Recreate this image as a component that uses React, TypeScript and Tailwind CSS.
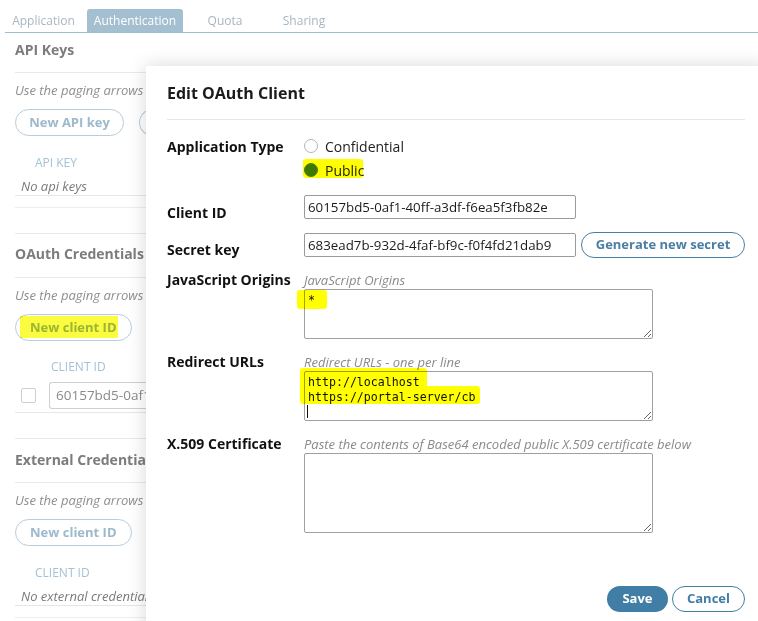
import React from "react";

function Mark({ className }: { className: string }) {
  return <span className={`pointer-events-none absolute bg-[#ffff00] mix-blend-multiply ${className}`} />;
}

function PageSection({
  title,
  buttonLabel,
  column,
  children,
  highlight,
}: {
  title: string;
  buttonLabel: string;
  column: React.ReactNode;
  children: React.ReactNode;
  highlight?: boolean;
}) {
  return (
    <>
      <div className="flex h-[44px] items-start border-b border-[#e9e9e9] pt-[10px] text-[14px] font-bold leading-[20px] text-[#7c7c7c]">
        {title}
      </div>
      <p className="mt-[8px] w-[131px] overflow-hidden whitespace-nowrap text-[13px] italic leading-[18px] text-[#8e8e8e]">
        Use the paging arrows to see more
      </p>
      <div className="mt-[10px] flex gap-[15px]">
        <button className="relative h-[27px] rounded-full border border-[#b9ccd9] px-[14px] text-[13px] font-bold text-[#9db9cc]">
          {buttonLabel}
          {highlight && <span className="pointer-events-none absolute left-[4px] top-[1px] h-[22px] w-[98px] bg-[#fbfb40] mix-blend-multiply" />}
        </button>
        <button className="h-[27px] w-[20px] rounded-l-full border border-r-0 border-[#b9ccd9]" />
      </div>
      {column}
      {children}
    </>
  );
}

export default function App() {
  return (
    <div className="relative h-[621px] w-[758px] overflow-hidden bg-white font-['Open_Sans',sans-serif]">
      {/* tabs */}
      <div className="ml-[5px] flex h-[33px] items-end gap-[5px] border-b border-[#9dbdd1] pt-[9px]">
        <div className="flex h-[23px] w-[77px] items-center justify-center text-[12px] text-[#a9b6c0]">Application</div>
        <div className="flex h-[23px] w-[96px] items-center justify-center rounded-t-[3px] bg-[#a4bfd0] text-[12px] text-white">
          Authentication
        </div>
        <div className="flex h-[23px] w-[74px] items-center justify-center text-[12px] text-[#a9b6c0]">Quota</div>
        <div className="flex h-[23px] w-[74px] items-center justify-center text-[12px] text-[#a9b6c0]">Sharing</div>
      </div>

      {/* page behind the dialog */}
      <div className="px-[15px]">
        <div className="flex h-[40px] items-start border-b border-[#e9e9e9] pt-[7px] text-[14px] font-bold leading-[20px] text-[#7c7c7c]">
          API Keys
        </div>
        <p className="mt-[8px] w-[131px] overflow-hidden whitespace-nowrap text-[13px] italic leading-[18px] text-[#8e8e8e]">
          Use the paging arrows to see more
        </p>
        <div className="mt-[10px] flex gap-[15px]">
          <button className="h-[27px] w-[109px] rounded-full border border-[#b9ccd9] text-[13px] font-bold text-[#9db9cc]">
            New API key
          </button>
          <button className="h-[27px] w-[20px] rounded-l-full border border-r-0 border-[#b9ccd9]" />
        </div>
        <div className="mt-[19px] pl-[20px] text-[12px] leading-[16px] text-[#a3c2d6]">API KEY</div>
        <div className="h-[25px] border-b border-[#e6e6e6] pl-[6px] pt-[6px] text-[13px] italic leading-[18px] text-[#7a7a7a]">
          No api keys
        </div>
        <div className="h-[12px] border-b border-[#eeeeee]" />
        <div className="h-[26px] border-b border-[#e9e9e9]" />

        <PageSection
          title="OAuth Credentials"
          buttonLabel="New client ID"
          highlight
          column={<div className="mt-[18px] pl-[36px] text-[12px] leading-[16px] text-[#a3c2d6]">CLIENT ID</div>}
        >
          <div className="flex items-center gap-[13px] border-b border-[#e6e6e6] pb-[3px] pl-[6px] pt-[7px]">
            <span className="h-[15px] w-[15px] rounded-[2px] border border-[#cfcfcf] bg-white" />
            <div className="flex h-[27px] w-[98px] items-center overflow-hidden whitespace-nowrap rounded-l-[3px] border border-r-0 border-[#cfcfcf] px-[6px] text-[13.5px] text-[#8a8a8a]">
              60157bd5-0af1-40ff-a3df-f6ea5f3fb82e
            </div>
          </div>
          <div className="h-[26px] border-b border-[#e9e9e9]" />
        </PageSection>

        <div className="[&>div:first-child]:pt-[11px]">
          <PageSection
            title="External Credentials"
            buttonLabel="New client ID"
            column={<div className="mt-[19px] pl-[20px] text-[12px] leading-[16px] text-[#a3c2d6]">CLIENT ID</div>}
          >
            <div className="h-[25px] border-b border-[#e6e6e6] pl-[6px] pt-[6px] text-[13px] italic leading-[18px] text-[#7a7a7a]">
              No external credentials
            </div>
            <div className="h-[12px] border-b border-[#eeeeee]" />
          </PageSection>
        </div>
      </div>

      {/* dialog */}
      <div className="absolute left-[146px] top-[66px] h-[600px] w-[620px] bg-white px-[21px] shadow-[0_0_18px_rgba(0,0,0,0.16)]">
        <div className="h-[54px] border-b border-[#e6e6e6] pt-[16px] text-[16px] font-bold leading-[22px] text-[#1b1b1b]">
          Edit OAuth Client
        </div>

        {/* application type */}
        <div className="mt-[14px] flex">
          <div className="flex h-[24px] w-[137px] items-center text-[14px] font-bold text-[#111]">Application Type</div>
          <div>
            <label className="flex h-[24px] items-center gap-[7px] text-[14px] text-[#222]">
              <span className="h-[14px] w-[14px] rounded-full border border-[#b5b5b5] bg-white" />
              Confidential
            </label>
            <label className="relative flex h-[24px] items-center gap-[7px] text-[14px] text-[#222]">
              <span className="h-[14px] w-[14px] rounded-full border border-[#4d7ea6] bg-[#3f78a6]" />
              Public
              <Mark className="-left-[1px] top-[1px] h-[19px] w-[60px] rounded-[3px]" />
            </label>
          </div>
        </div>

        {/* client id */}
        <div className="mt-[13px] flex">
          <div className="w-[137px] pt-[8px] text-[14px] font-bold leading-[20px] text-[#111]">Client ID</div>
          <input
            readOnly
            value="60157bd5-0af1-40ff-a3df-f6ea5f3fb82e"
            className="h-[24px] w-[272px] rounded-[2px] border border-[#9a9a9a] px-[3px] text-[13.3px] text-[#1b1b1b] outline-none"
          />
        </div>

        {/* secret */}
        <div className="mt-[9px] flex">
          <div className="w-[137px] pt-[8px] text-[14px] font-bold leading-[20px] text-[#111]">Secret key</div>
          <div className="flex h-[26px] items-center gap-[5px]">
            <input
              readOnly
              value="683ead7b-932d-4faf-bf9c-f0f4fd21dab9"
              className="h-[24px] w-[272px] rounded-[2px] border border-[#9a9a9a] px-[3px] text-[13.3px] text-[#1b1b1b] outline-none"
            />
            <button className="h-[26px] w-[164px] rounded-full border border-[#4a7fa5] text-[13px] font-bold text-[#4a7fa5]">
              Generate new secret
            </button>
          </div>
        </div>

        {/* origins */}
        <div className="mt-[10px] flex">
          <div className="w-[137px] text-[14px] font-bold leading-[20px] text-[#111]">JavaScript Origins</div>
          <div>
            <div className="mt-[1px] text-[13px] italic leading-[18px] text-[#8a8a8a]">JavaScript Origins</div>
            <div className="relative">
              <textarea
                readOnly
                value="*"
                className="block h-[50px] w-[349px] rounded-[2px] border border-[#a0a0a0] p-[3px] font-['DejaVu_Sans_Mono',monospace] text-[11.6px] leading-[15px] text-[#111] outline-none"
              />
              <Mark className="-left-[7px] top-[1px] h-[19px] w-[30px] rounded-[3px]" />
            </div>
          </div>
        </div>

        {/* redirect */}
        <div className="mt-[13px] flex">
          <div className="w-[137px] text-[14px] font-bold leading-[20px] text-[#111]">Redirect URLs</div>
          <div>
            <div className="mt-[1px] text-[13px] italic leading-[18px] text-[#8a8a8a]">Redirect URLs - one per line</div>
            <div className="relative">
              <textarea
                readOnly
                value={"http://localhost\nhttps://portal-server/cb\n"}
                className="block h-[50px] w-[349px] resize-y overflow-hidden rounded-[2px] border border-[#a0a0a0] px-[3px] py-[3px] font-['DejaVu_Sans_Mono',monospace] text-[11.6px] leading-[15px] text-[#111] outline-none"
              />
              <Mark className="-left-[4px] -top-[3px] h-[22px] w-[127px] rounded-[3px]" />
              <Mark className="-left-[4px] top-[15px] h-[18px] w-[180px] rounded-[3px]" />
              <span className="pointer-events-none absolute left-[3px] top-[34px] h-[13px] w-px bg-[#111]" />
            </div>
          </div>
        </div>

        {/* certificate */}
        <div className="mt-[13px] flex">
          <div className="w-[137px] text-[14px] font-bold leading-[20px] text-[#111]">X.509 Certificate</div>
          <div>
            <div className="mt-[1px] whitespace-nowrap text-[13px] italic leading-[18px] text-[#8a8a8a]">
              Paste the contents of Base64 encoded public X.509 certificate below
            </div>
            <textarea
              readOnly
              className="block h-[80px] w-[349px] rounded-[2px] border border-[#a0a0a0] p-[3px] outline-none"
            />
          </div>
        </div>

        <div className="mt-[53px] flex w-[578px] justify-end gap-[4px]">
          <button className="h-[26px] w-[61px] rounded-full bg-[#417ea5] text-[13px] font-bold text-white">Save</button>
          <button className="h-[26px] w-[73px] rounded-full border border-[#417ea5] text-[13px] font-bold text-[#417ea5]">
            Cancel
          </button>
        </div>
      </div>
    </div>
  );
}
